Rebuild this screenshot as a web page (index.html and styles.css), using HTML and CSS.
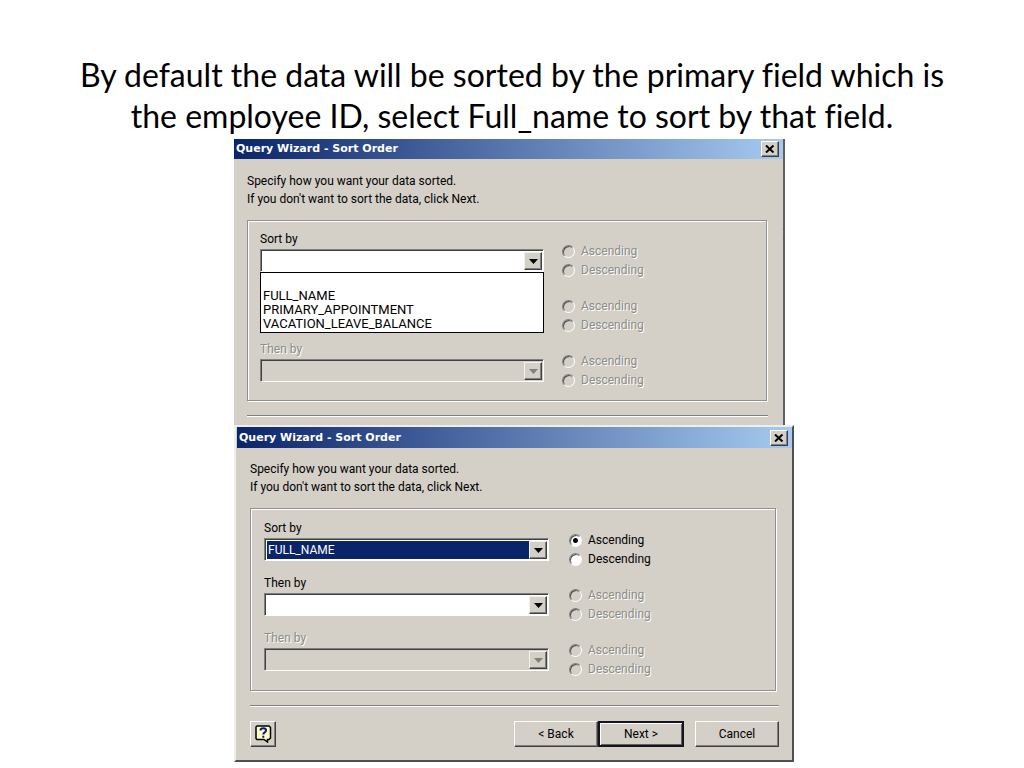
FILE: index.html
```
<!DOCTYPE html>
<html lang="en">
<head>
<meta charset="utf-8">
<title>Query Wizard - Sort Order</title>
<link rel="stylesheet" href="styles.css">
</head>
<body>
<main class="slide">
  <h1 class="headline">By default the data will be sorted by the primary field which is the employee ID, select Full_name to sort by that field.</h1>
  <div class="stack">

    <section class="dialog dialog-back" aria-label="Sort order, list open">
      <header class="titlebar">
        <h2 class="caption">Query Wizard - Sort Order</h2>
        <button class="close" type="button" aria-label="Close"><svg width="10" height="8" viewBox="0 0 10 8"><path d="M1 0.5 8.5 7.5M8.5 0.5 1 7.5" stroke="#000" stroke-width="2" fill="none"/></svg></button>
      </header>
      <div class="content">
        <p class="intro">Specify how you want your data sorted.<br>If you don't want to sort the data, click Next.</p>
        <div class="group">
          <div class="row">
            <div class="field">
              <label class="label" for="a1">Sort by</label>
              <div class="combo"><select id="a1" class="select"><option></option></select><span class="arrow"><svg width="9" height="5" viewBox="0 0 9 5"><path d="M0 0H9L4.500 5Z"/></svg></span></div>
              <ul class="list" role="listbox" aria-label="Sort by choices">
                <li class="item" role="option" aria-label="None"></li>
                <li class="item" role="option">FULL_NAME</li>
                <li class="item" role="option">PRIMARY_APPOINTMENT</li>
                <li class="item" role="option">VACATION_LEAVE_BALANCE</li>
              </ul>
            </div>
            <div class="radios">
              <label class="radio off"><input type="radio" name="ra1" disabled>Ascending</label>
              <label class="radio off"><input type="radio" name="ra1" disabled>Descending</label>
            </div>
          </div>
          <div class="row">
            <div class="field"></div>
            <div class="radios">
              <label class="radio off"><input type="radio" name="ra2" disabled>Ascending</label>
              <label class="radio off"><input type="radio" name="ra2" disabled>Descending</label>
            </div>
          </div>
          <div class="row">
            <div class="field">
              <label class="label off" for="a3">Then by</label>
              <div class="combo combo-off"><select id="a3" class="select" disabled><option></option></select><span class="arrow"><svg width="9" height="5" viewBox="0 0 9 5"><path d="M0 0H9L4.500 5Z"/></svg></span></div>
            </div>
            <div class="radios">
              <label class="radio off"><input type="radio" name="ra3" disabled>Ascending</label>
              <label class="radio off"><input type="radio" name="ra3" disabled>Descending</label>
            </div>
          </div>
        </div>
        <hr class="rule">
      </div>
    </section>

    <section class="dialog dialog-front" aria-label="Sort order, Full_name chosen">
      <header class="titlebar">
        <h2 class="caption">Query Wizard - Sort Order</h2>
        <button class="close" type="button" aria-label="Close"><svg width="10" height="8" viewBox="0 0 10 8"><path d="M1 0.5 8.5 7.5M8.5 0.5 1 7.5" stroke="#000" stroke-width="2" fill="none"/></svg></button>
      </header>
      <div class="content">
        <p class="intro">Specify how you want your data sorted.<br>If you don't want to sort the data, click Next.</p>
        <div class="group">
          <div class="row">
            <div class="field">
              <label class="label" for="b1">Sort by</label>
              <div class="combo"><select id="b1" class="select chosen"><option>FULL_NAME</option></select><span class="arrow"><svg width="9" height="5" viewBox="0 0 9 5"><path d="M0 0H9L4.500 5Z"/></svg></span></div>
            </div>
            <div class="radios">
              <label class="radio"><input type="radio" name="rb1" checked>Ascending</label>
              <label class="radio"><input type="radio" name="rb1">Descending</label>
            </div>
          </div>
          <div class="row">
            <div class="field">
              <label class="label" for="b2">Then by</label>
              <div class="combo"><select id="b2" class="select"><option></option></select><span class="arrow"><svg width="9" height="5" viewBox="0 0 9 5"><path d="M0 0H9L4.500 5Z"/></svg></span></div>
            </div>
            <div class="radios">
              <label class="radio off"><input type="radio" name="rb2" disabled>Ascending</label>
              <label class="radio off"><input type="radio" name="rb2" disabled>Descending</label>
            </div>
          </div>
          <div class="row">
            <div class="field">
              <label class="label off" for="b3">Then by</label>
              <div class="combo combo-off"><select id="b3" class="select" disabled><option></option></select><span class="arrow"><svg width="9" height="5" viewBox="0 0 9 5"><path d="M0 0H9L4.500 5Z"/></svg></span></div>
            </div>
            <div class="radios">
              <label class="radio off"><input type="radio" name="rb3" disabled>Ascending</label>
              <label class="radio off"><input type="radio" name="rb3" disabled>Descending</label>
            </div>
          </div>
        </div>
        <hr class="rule">
        <footer class="actions">
          <button class="button help" type="button" aria-label="Help"><svg width="17" height="18" viewBox="0 0 17 18"><path d="M2 1H14L15.500 2.500V13L14 14.500H12.500V17L9 14.500H2L1 13.500V2Z" fill="#ffffc8" stroke="#000" stroke-width="1.500"/><path d="M5.500 5.500C5.500 2.500 11 2.500 11 5.500C11 7.500 8.300 7.300 8.300 9.500M8.300 10.700V12.700" fill="none" stroke="#15157a" stroke-width="2"/></svg></button>
          <button class="button wide back" type="button">&lt; Back</button>
          <button class="button wide default" type="button">Next &gt;</button>
          <button class="button wide cancel" type="button">Cancel</button>
        </footer>
      </div>
    </section>

  </div>
</main>
</body>
</html>
```
FILE: styles.css
```
* { box-sizing: border-box; }
body { margin: 0; background: #fff; color: #000; font-family: Roboto, "Liberation Sans", sans-serif; font-size: 12px; }
.slide { padding: 54px 60px 0; }
.headline { margin: 0 0 3px; font: 400 32px/41px Lato, "Open Sans", sans-serif; font-variant-ligatures: none; text-align: center; }
.stack { max-width: 564px; margin: 0 auto; padding-left: 4px; }

.dialog { position: relative; background: #d4d0c8; }
.dialog-back { margin-right: 9px; border-right: 2px solid #606060; }
.dialog-back::after { content: ""; position: absolute; left: 100%; top: 89px; width: 1px; height: 7px; border: solid #555; border-width: 2px 0; }
.dialog-front { border: 2px solid; border-color: #f0eeea #505050 #505050 #f0eeea; }

.titlebar { display: flex; align-items: center; justify-content: space-between; height: 20px; padding: 0 4px 0 2px; background: linear-gradient(90deg, #0a246a, #a6caf0); }
.dialog-front .titlebar { height: 21px; margin-left: 1px; }
.caption { margin: 0; color: #fff; font: 700 11px/20px "DejaVu Sans", sans-serif; }
.close { display: flex; align-items: center; justify-content: center; width: 18px; height: 16px; padding: 0; background: #d4d0c8; border: 1px solid; border-color: #fff #404040 #404040 #fff; box-shadow: inset -1px -1px #808080; }

.content { padding: 13px 15px 8px 13px; }
.dialog-front .content { padding: 12px 13px 13px 14px; }
.intro { margin: 0; line-height: 18px; }
.group { margin: 12px 1px 14px 0; padding: 9px 12px 5px; border: 1px solid #909090; box-shadow: 1px 1px #fff, inset 1px 1px #fff; }
.dialog-front .group { margin-right: 3px; padding: 10px 13px 6px; }
.row { display: flex; gap: 18px; height: 55px; }
.dialog-front .row { gap: 20px; }
.field { position: relative; flex: 0 1 285px; min-width: 0; }
.dialog-back .field { flex-basis: 284px; }
.label { display: block; height: 19px; line-height: 18px; }
.off { color: #8c8c88; text-shadow: 1px 1px #fff; }

.combo { display: flex; height: 23px; padding: 1px; background: #fff; border: 1px solid; border-color: #808080 #fff #fff #808080; box-shadow: inset 1px 1px #404040; }
.select { appearance: none; flex: 1; min-width: 0; margin: 1px 0 0 1px; padding: 0 1px; border: 0; border-radius: 0; background: transparent; color: #000; font: inherit; line-height: 17px; }
.chosen { background: #0a246a; color: #fff; }
.arrow { display: flex; align-items: center; justify-content: center; width: 18px; margin-top: 1px; background: #d4d0c8; border: 1px solid; border-color: #f4f2ee #404040 #404040 #f4f2ee; box-shadow: inset -1px -1px #808080; }
.combo-off { background: #d4d0c8; }
.combo-off .arrow { fill: #808080; }
.list { position: absolute; z-index: 1; top: 42px; left: 0; right: 0; margin: 0; padding: 2px 2px 1px; list-style: none; background: #fff; border: 1px solid #000; font-size: 13px; }
.item { height: 14px; line-height: 14px; }

.radios { padding-top: 12px; }
.radio { display: flex; align-items: center; gap: 6px; height: 19px; line-height: 19px; }
.radio input { appearance: none; width: 13px; height: 13px; margin: 0; border: 1px solid; border-color: #808080 #fff #fff #808080; border-radius: 50%; background: #fff; box-shadow: inset 1px 1px #505050; }
.radio input:disabled { background: #d4d0c8; }
.radio input:checked { background: radial-gradient(circle, #000 2px, #fff 3px); }

.rule { margin: 0; border: 0; height: 2px; background: #fff; border-top: 1px solid #808080; }
.actions { display: flex; margin-top: 14px; }
.button { display: flex; align-items: center; justify-content: center; height: 26px; padding: 0; background: #d4d0c8; border: 1px solid; border-color: #fff #404040 #404040 #fff; box-shadow: inset -1px -1px #808080; color: #000; font: inherit; }
.help { width: 26px; margin-right: auto; }
.wide { width: 84px; }
.default { width: 86px; border: 2px solid #15151f; box-shadow: inset 1px 1px #fff, inset -1px -1px #606060; }
.cancel { margin-left: 11px; }
```
